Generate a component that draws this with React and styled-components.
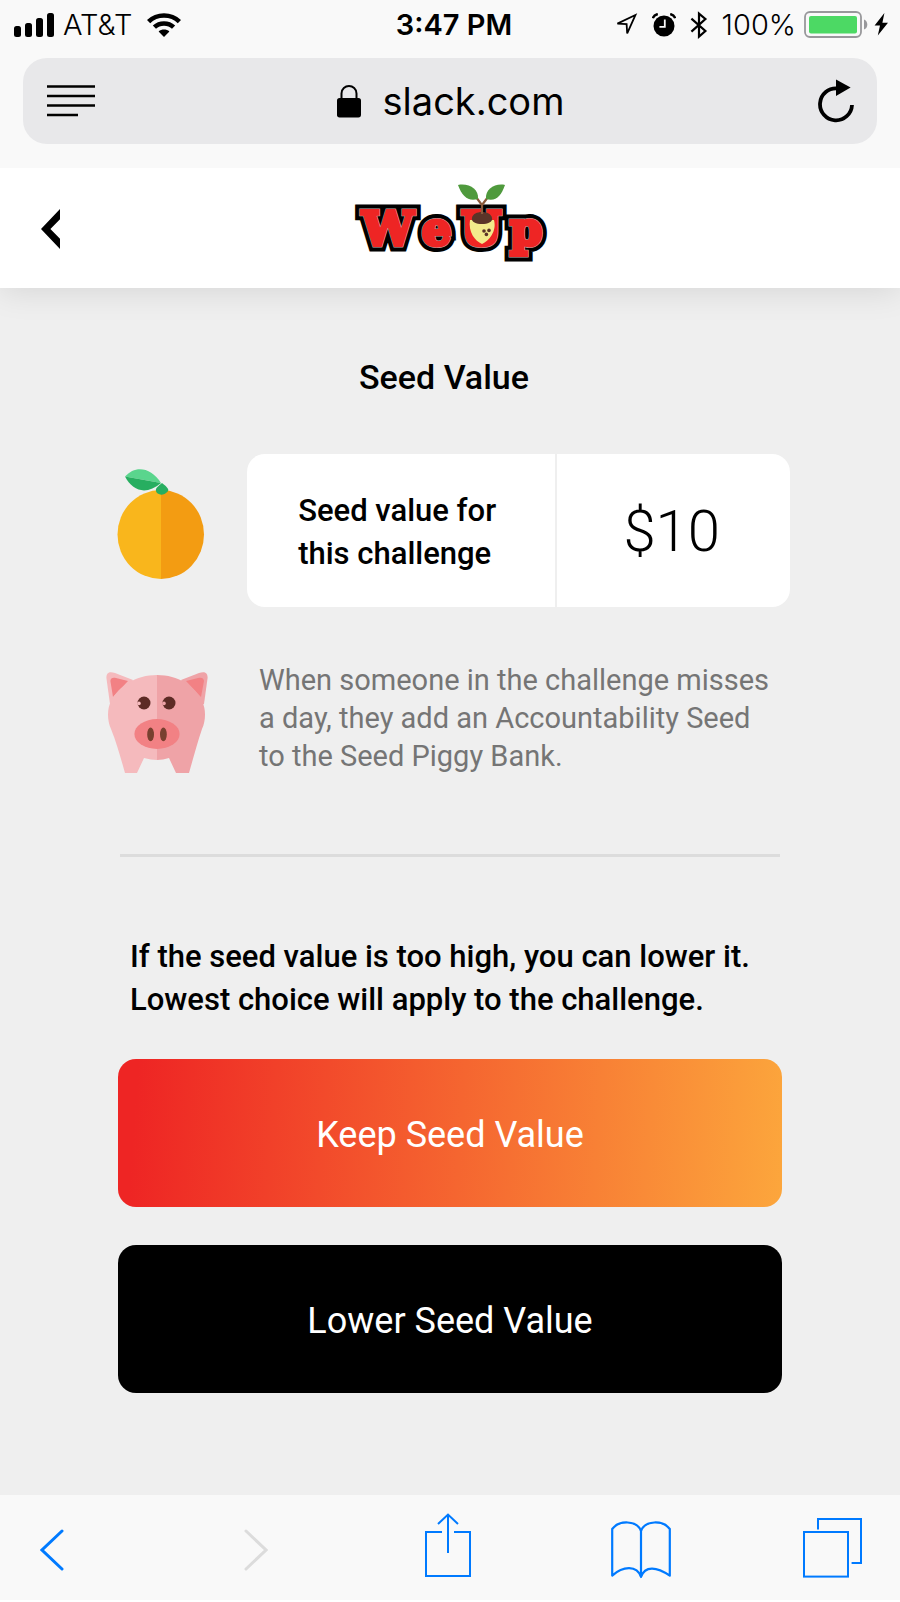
import React, { useState } from "react";
import styled, { createGlobalStyle } from "styled-components";

const App = () => {
  const [seedValue, setSeedValue] = useState(10);

  const lowerValue = () => {
    if (seedValue > 1) setSeedValue(seedValue - 1);
  };

  return (
    <>
      <GlobalStyle />
      <Screen>
        <BrowserTop>
          <StatusBar>
            <StatusGroup>
              <SignalIcon />
              <Carrier>AT&amp;T</Carrier>
              <WifiIcon />
            </StatusGroup>
            <Clock>3:47 PM</Clock>
            <StatusGroup $end>
              <LocationIcon />
              <AlarmIcon />
              <BluetoothIcon />
              <Battery>100%</Battery>
              <BatteryIcon />
            </StatusGroup>
          </StatusBar>
          <AddressBar>
            <IconButton type="button" aria-label="Reader view">
              <ReaderIcon />
            </IconButton>
            <Address href="#slack">
              <LockIcon />
              slack.com
            </Address>
            <IconButton type="button" aria-label="Reload">
              <ReloadIcon />
            </IconButton>
          </AddressBar>
        </BrowserTop>

        <Header>
          <IconButton type="button" aria-label="Back">
            <BackIcon />
          </IconButton>
          <Logo />
        </Header>

        <Content>
          <Title>Seed Value</Title>
          <SeedRow>
            <OrangeBox>
              <OrangeIcon />
            </OrangeBox>
            <Card>
              <CardLabel>
                Seed value for
                <br />
                this challenge
              </CardLabel>
              <CardValue>${seedValue}</CardValue>
            </Card>
          </SeedRow>
          <InfoRow>
            <PigBox>
              <PigIcon />
            </PigBox>
            <InfoText>
              When someone in the challenge misses a day, they add an
              Accountability Seed to the Seed Piggy Bank.
            </InfoText>
          </InfoRow>
          <Divider />
          <Choices>
            <Hint>
              If the seed value is too high, you can lower it. Lowest choice
              will apply to the challenge.
            </Hint>
            <ChoiceButton type="button" $primary>
              Keep Seed Value
            </ChoiceButton>
            <ChoiceButton type="button" onClick={lowerValue}>
              Lower Seed Value
            </ChoiceButton>
          </Choices>
        </Content>

        <Toolbar>
          <IconButton type="button" aria-label="Previous page">
            <Chevron d="M22 2 L2 21 L22 40" color="#007aff" />
          </IconButton>
          <IconButton type="button" aria-label="Next page" disabled>
            <Chevron d="M2 2 L22 21 L2 40" color="#dcdcdc" />
          </IconButton>
          <IconButton type="button" aria-label="Share">
            <ShareIcon />
          </IconButton>
          <IconButton type="button" aria-label="Bookmarks">
            <BookIcon />
          </IconButton>
          <IconButton type="button" aria-label="Tabs">
            <TabsIcon />
          </IconButton>
        </Toolbar>
      </Screen>
    </>
  );
};

export default App;

const SignalIcon = () => (
  <svg width="40" height="24" viewBox="0 0 40 24">
    <rect x="0" y="13" width="7" height="11" rx="2.5" />
    <rect x="11" y="10" width="7" height="14" rx="2.5" />
    <rect x="22" y="5" width="7" height="19" rx="2.5" />
    <rect x="33" y="0" width="7" height="24" rx="2.5" />
  </svg>
);

const WifiIcon = () => (
  <svg width="34" height="24" viewBox="0 0 34 24">
    <g fill="none" stroke="#000" strokeWidth="4.6">
      <path d="M1.6 8.6 C10 0.4 24 0.4 32.4 8.6" />
      <path d="M7.4 14.2 C12.6 9.2 21.4 9.2 26.6 14.2" />
    </g>
    <path d="M11.6 18.4 C14.6 15.8 19.4 15.8 22.4 18.4 L17 24 Z" />
  </svg>
);

const LocationIcon = () => (
  <svg width="24" height="24" viewBox="0 0 24 24">
    <path
      d="M21.4 2 L3.4 10.6 L12.6 11 L13.2 20.4 Z"
      fill="none"
      stroke="#000"
      strokeWidth="1.8"
    />
  </svg>
);

const AlarmIcon = () => (
  <svg width="24" height="24" viewBox="0 0 24 24">
    <circle cx="12" cy="13" r="10.5" />
    <path
      d="M0.8 5.2 C1.6 2.8 3.2 1.6 5.8 1 M23.2 5.2 C22.4 2.8 20.8 1.6 18.2 1"
      fill="none"
      stroke="#000"
      strokeWidth="2.4"
    />
    <path d="M12.8 6.5 V13.8 H7.4" fill="none" stroke="#f9f9f9" strokeWidth="1.8" />
  </svg>
);

const BluetoothIcon = () => (
  <svg width="18" height="28" viewBox="0 0 18 28">
    <path
      d="M1.4 7.6 L15.4 20 L9 25.6 V2.6 L15.4 8 L1.4 20.6"
      fill="none"
      stroke="#000"
      strokeWidth="2.2"
    />
  </svg>
);

const BatteryIcon = () => (
  <svg width="86" height="28" viewBox="0 0 86 28">
    <rect x="1" y="1" width="56" height="25" rx="5" fill="none" stroke="#98989b" strokeWidth="1.8" />
    <rect x="5" y="5" width="48" height="17.6" rx="2" fill="#4cd964" />
    <path d="M60 8.4 C64.4 10 64.4 17 60 18.6 Z" fill="#98989b" />
    <path d="M80.4 2 L70.6 14.6 H76 L73.8 24.6 L84 11.8 H78.4 Z" />
  </svg>
);

const ReaderIcon = () => (
  <svg width="48" height="32" viewBox="0 0 48 32">
    <path d="M0 1.5 H48 M0 11 H48 M0 20.5 H48 M0 30 H31" stroke="#000" strokeWidth="2.4" />
  </svg>
);

const LockIcon = () => (
  <svg width="24" height="33" viewBox="0 0 24 33">
    <rect y="13" width="24" height="19.4" rx="2.6" />
    <path
      d="M4.5 14 V8.6 C4.5 -1.4 19.5 -1.4 19.5 8.6 V14"
      fill="none"
      stroke="#000"
      strokeWidth="2"
    />
  </svg>
);

const ReloadIcon = () => (
  <svg width="36" height="44" viewBox="0 0 36 44">
    <path d="M19.6 9.4 A16 16 0 1 0 34 26" fill="none" stroke="#000" strokeWidth="3.8" />
    <path d="M18 0.5 L32.6 8.6 L18 17 Z" />
  </svg>
);

const BackIcon = () => (
  <svg width="20" height="44" viewBox="0 -2 20 44">
    <path d="M0 21 L19 1 V11.2 L9.4 21 L19 30.8 V41 Z" />
  </svg>
);

const Chevron = ({ d, color }) => (
  <svg width="24" height="46" viewBox="0 -4 24 46">
    <path d={d} fill="none" stroke={color} strokeWidth="3" strokeLinecap="round" />
  </svg>
);

const ShareIcon = () => (
  <svg width="46" height="69" viewBox="0 0 46 69">
    <g fill="none" stroke="#007aff" strokeWidth="2">
      <path d="M17 19 H1 V63 H45 V19 H29" />
      <path d="M23 40 V2 M13 11 L23 1.6 L33 11" />
    </g>
  </svg>
);

const BookIcon = () => (
  <svg width="60" height="63" viewBox="0 -5 60 63">
    <path
      d="M30 56 V10 C26 -1 8 -1 1.2 8 V54.6 C12 45 26 44 30 56 C34 44 46 46 58.8 54.6 V8 C52 -1 34 -1 30 10"
      fill="none"
      stroke="#007aff"
      strokeWidth="2.2"
      strokeLinejoin="round"
    />
  </svg>
);

const TabsIcon = () => (
  <svg width="60" height="60" viewBox="0 0 60 60">
    <g fill="none" stroke="#007aff" strokeWidth="2">
      <rect x="1" y="14" width="44" height="44.6" />
      <path d="M15 11.4 V1 H58 V45 H48.6" />
    </g>
  </svg>
);

const OrangeIcon = () => (
  <svg width="88" height="112" viewBox="0 0 88 112">
    <path d="M44 22 A43.5 44.5 0 0 0 44 111 Z" fill="#f9b61c" />
    <path d="M44 22 A43 44.5 0 0 1 44 111 Z" fill="#f39c12" />
    <path d="M8 8.6 C18 -3 34 -1 44 15 Z" fill="#5ad58d" />
    <path d="M8 8.6 C16 24 30 27 44 15 Z" fill="#27ae60" />
    <path d="M45 15 C50 19 54 22 49 25 C46 27.6 42 27 39.6 24.6 C37 20 42 18 45 15 Z" fill="#27ae60" />
  </svg>
);

const PigIcon = () => (
  <svg width="102" height="101" viewBox="0 0 102 101">
    <path d="M4 32 L0.4 6 C0.4 0 4 -0.6 9 1 L27 8 L14 34 Z" fill="#f5babd" />
    <path d="M98 32 L101.6 6 C101.6 0 98 -0.6 93 1 L75 8 L88 34 Z" fill="#efa3a7" />
    <path d="M7 25 L4.4 9 C4.4 6 7 5 10 6 L22 9 Z" fill="#f28184" />
    <path d="M95 25 L98 9 C98 6 95 5 92 6 L80 9 Z" fill="#f28184" />
    <path
      d="M51 3 C30 3 13 14 5 29 C1 37 1 48 5 57 C11 72 15 87 19 101 H31 L38 86 Q45 88 51 88 Z"
      fill="#f5babd"
    />
    <path
      d="M51 3 C72 3 89 14 96 29 C100 37 100 48 96 57 C91 72 87 87 83 101 H70 L63 86 Q57 88 51 88 Z"
      fill="#efa3a7"
    />
    <circle cx="38" cy="31" r="6.5" fill="#5d2b25" />
    <circle cx="63" cy="31" r="6.5" fill="#5d2b25" />
    <circle cx="33" cy="31.4" r="1.8" fill="#f5babd" />
    <circle cx="58" cy="31.4" r="1.8" fill="#efa3a7" />
    <ellipse cx="51" cy="62" rx="22.6" ry="15" fill="#f28184" />
    <ellipse cx="44.6" cy="62.4" rx="3.4" ry="6.8" fill="#78402f" />
    <ellipse cx="57.4" cy="62.4" rx="3.4" ry="6.8" fill="#78402f" />
  </svg>
);

const Logo = () => (
  <LogoSvg width="200" height="84" viewBox="0 0 200 84" role="img" aria-label="WeUp">
    <LogoText $color="#000" $stroke={13} x="12 72 111 160" y="59">
      WeUp
    </LogoText>
    <LogoText $color="#b9a9a9" $stroke={5} x="12 72 111 160" y="59">
      WeUp
    </LogoText>
    <LogoText $color="#ee2524" $stroke={4} x="12 72 111 160" y="59">
      WeUp
    </LogoText>
    <path d="M120 34 C118 46 125 55 132 58 C139 55 147 45 144 34 Z" fill="#f3ea8b" />
    <path d="M122 32 C123 24 141 24 142 32 C144 40 120 40 122 32 Z" fill="#5b3428" />
    <path d="M132 28 V19 L126 11 M132 19 L138 11" fill="none" stroke="#8b5a3c" strokeWidth="2.2" />
    <path d="M108 -1 C119 -3 129 3 128 13 C118 16 112 10 108 -1 Z" fill="#4f9a3d" />
    <path d="M155 -1 C145 -3 135 3 136 13 C146 16 151 10 155 -1 Z" fill="#4f9a3d" />
    <g fill="#5b3428">
      <circle cx="134" cy="45" r="1.8" />
      <circle cx="139" cy="44.4" r="1.8" />
      <circle cx="136.4" cy="48.4" r="1.8" />
    </g>
  </LogoSvg>
);

const GlobalStyle = createGlobalStyle`
  * {
    box-sizing: border-box;
  }

  body {
    margin: 0;
    background: #fff;
    color: #000;
    font-family: Roboto, sans-serif;
  }

  svg {
    display: block;
    flex-shrink: 0;
  }
`;

const Screen = styled.div`
  display: flex;
  flex-direction: column;
  min-height: 100vh;
  padding-bottom: 2px;
`;

const BrowserTop = styled.div`
  z-index: 2;
  padding: 0 23px 24px;
  background: #f9f9f9;
  font-family: Inter, sans-serif;
`;

const StatusBar = styled.div`
  display: grid;
  grid-template-columns: 1fr auto 1fr;
  align-items: center;
  height: 58px;
  margin: 0 -13px 0 -9px;
  padding-bottom: 9px;
`;

const StatusGroup = styled.div`
  display: flex;
  align-items: center;
  justify-content: ${(props) => (props.$end ? "flex-end" : "flex-start")};
  gap: ${(props) => (props.$end ? "14px" : "9px")};
`;

const Carrier = styled.span`
  margin-right: 6px;
  font-size: 29px;
  font-weight: 300;
`;

const Clock = styled.span`
  padding-left: 4px;
  font-size: 29px;
  font-weight: 600;
`;

const Battery = styled.span`
  margin-right: -6px;
  font-size: 29px;
  font-weight: 300;
`;

const IconButton = styled.button`
  padding: 0;
  border: none;
  background: none;
`;

const AddressBar = styled.div`
  display: grid;
  grid-template-columns: 1fr auto 1fr;
  align-items: center;
  height: 86px;
  padding: 0 23px 0 24px;
  border-radius: 24px;
  background: #e8e8ea;

  ${IconButton}:first-child {
    justify-self: start;
  }

  ${IconButton}:last-child {
    justify-self: end;
  }
`;

const Address = styled.a`
  display: flex;
  align-items: center;
  gap: 22px;
  color: #000;
  font-size: 38px;
  text-decoration: none;
`;

const Header = styled.header`
  display: grid;
  grid-template-columns: 1fr auto 1fr;
  align-items: center;
  height: 120px;
  padding: 0 41px;
  background: #fff;
  box-shadow: 0 4px 30px rgba(0, 0, 0, 0.1);
  z-index: 1;

  button {
    justify-self: start;
  }
`;

const LogoSvg = styled.svg`
  overflow: visible;
`;

const LogoText = styled.text`
  font-family: "DejaVu Serif", serif;
  font-size: 46px;
  font-weight: bold;
  fill: ${(props) => props.$color};
  stroke: ${(props) => props.$color};
  stroke-width: ${(props) => props.$stroke}px;
  stroke-miterlimit: 1.5;
`;

const Content = styled.main`
  flex: 1;
  padding: 68px 106px 0;
  background: #efefef;
`;

const Title = styled.h1`
  margin: 0 0 56px;
  padding-right: 12px;
  font-size: 34px;
  font-weight: 500;
  line-height: 42px;
  text-align: center;
`;

const SeedRow = styled.section`
  display: flex;
  align-items: center;
  gap: 31px;
  margin-bottom: 54px;
  padding-right: 4px;
`;

const OrangeBox = styled.div`
  display: flex;
  justify-content: center;
  width: 110px;
  flex-shrink: 0;
  padding-bottom: 14px;
`;

const PigBox = styled.div`
  width: 102px;
  flex-shrink: 0;
  padding-bottom: 2px;
`;

const Card = styled.div`
  display: grid;
  grid-template-columns: 4fr 3fr;
  flex: 1;
  height: 153px;
  border-radius: 18px;
  background: #fff;
`;

const CardLabel = styled.div`
  display: flex;
  align-items: center;
  justify-content: center;
  padding: 2px 8px 0 0;
  border-right: 2px solid #efefef;
  font-size: 31px;
  font-weight: 500;
  line-height: 43px;
`;

const CardValue = styled.div`
  display: flex;
  align-items: center;
  justify-content: center;
  padding-right: 4px;
  font-size: 58px;
  font-weight: 300;
`;

const InfoRow = styled.section`
  display: flex;
  align-items: flex-end;
  gap: 51px;
`;

const InfoText = styled.p`
  margin: 0;
  padding-right: 12px;
  color: #757575;
  font-size: 29px;
  line-height: 38px;
`;

const Divider = styled.hr`
  margin: 79px 14px 78px;
  border: none;
  border-top: 3px solid #dcdcdc;
`;

const Choices = styled.section`
  display: flex;
  flex-direction: column;
  gap: 38px;
  padding: 0 12px;
`;

const Hint = styled.p`
  margin: 0;
  padding: 0 12px;
  font-size: 31px;
  font-weight: 500;
  line-height: 43px;
`;

const ChoiceButton = styled.button`
  height: 148px;
  padding: 4px 0 0;
  border: none;
  border-radius: 18px;
  background: ${(props) =>
    props.$primary ? "linear-gradient(94deg, #ee2524 3%, #fca63c 100%)" : "#000"};
  color: #fff;
  font-family: inherit;
  font-size: 36px;
`;

const Toolbar = styled.nav`
  display: flex;
  align-items: center;
  justify-content: space-between;
  height: 105px;
  padding: 0 37px 0 22px;
  background: #f9f9f9;

  ${IconButton} {
    display: flex;
    justify-content: center;
    width: 60px;
  }

  ${IconButton}:first-child {
    margin-right: 11px;
  }
`;
